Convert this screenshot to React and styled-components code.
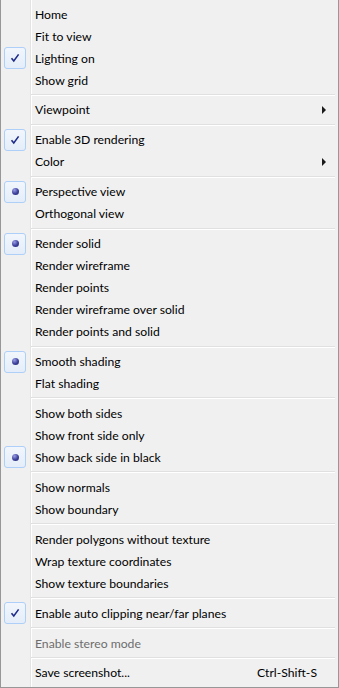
import React from 'react'
import styled, { createGlobalStyle } from 'styled-components'

const Global = createGlobalStyle`
  html, body { margin: 0; padding: 0; background: #f0f0f0; }
  body { font-family: Lato, "Noto Sans", sans-serif; }
`

const Menu = styled.div`
  box-sizing: border-box;
  width: 339px;
  height: 688px;
  padding: 3px 3px 3px 0;
  border: 1px solid #979797;
  border-top: none;
  background: linear-gradient(to right, #f0f0f0 0, #f0f0f0 29px, #e2e3e3 29px, #e2e3e3 30px, #ffffff 30px, #ffffff 31px, #f0f0f0 31px);
  display: flex;
  flex-direction: column;
`

const Row = styled.div`
  height: 22px;
  display: flex;
  align-items: center;
  font-size: 12.2px;
  color: ${({ $disabled }) => ($disabled ? '#6d6d6d' : '#000')};
`

const Gutter = styled.div`
  width: 34px;
  height: 22px;
  flex: none;
  display: flex;
  align-items: center;
`

const Mark = styled.div`
  box-sizing: border-box;
  width: 22px;
  height: 22px;
  margin-left: 3px;
  border: 1px solid #aecff7;
  border-radius: 3px;
  background: linear-gradient(#f2f6fc, #e4edf9);
  display: flex;
  align-items: center;
  justify-content: center;
`

const Dot = styled.div`
  width: 7px;
  height: 7px;
  border-radius: 50%;
  background: radial-gradient(circle at 35% 30%, #9a9ee6 0, #3c3f9a 55%, #23266c 100%);
`

const Label = styled.span`
  flex: 1;
  white-space: nowrap;
`

const Shortcut = styled.span`
  margin-right: 18px;
  white-space: nowrap;
`

const Arrow = styled.span`
  width: 0;
  height: 0;
  margin-right: 9px;
  border-top: 4px solid transparent;
  border-bottom: 4px solid transparent;
  border-left: 4px solid #1a1a1a;
`

const Separator = styled.div`
  height: 8px;
  margin-left: 30px;
  display: flex;
  flex-direction: column;
  justify-content: center;
  &::before {
    content: '';
    height: 1px;
    background: #e0e0e0;
  }
  &::after {
    content: '';
    height: 1px;
    background: #ffffff;
  }
`

const Check = () => (
  <svg width="10" height="10" viewBox="0 0 10 10">
    <path d="M1.5 5.2 L3.8 8 L8.6 1.4" fill="none" stroke="#1e2a8a" strokeWidth="1.6" />
  </svg>
)

const groups = [
  [
    { t: 'Home' },
    { t: 'Fit to view' },
    { t: 'Lighting on', m: 'check' },
    { t: 'Show grid' },
  ],
  [{ t: 'Viewpoint', sub: true }],
  [
    { t: 'Enable 3D rendering', m: 'check' },
    { t: 'Color', sub: true },
  ],
  [
    { t: 'Perspective view', m: 'dot' },
    { t: 'Orthogonal view' },
  ],
  [
    { t: 'Render solid', m: 'dot' },
    { t: 'Render wireframe' },
    { t: 'Render points' },
    { t: 'Render wireframe over solid' },
    { t: 'Render points and solid' },
  ],
  [
    { t: 'Smooth shading', m: 'dot' },
    { t: 'Flat shading' },
  ],
  [
    { t: 'Show both sides' },
    { t: 'Show front side only' },
    { t: 'Show back side in black', m: 'dot' },
  ],
  [
    { t: 'Show normals' },
    { t: 'Show boundary' },
  ],
  [
    { t: 'Render polygons without texture' },
    { t: 'Wrap texture coordinates' },
    { t: 'Show texture boundaries' },
  ],
  [{ t: 'Enable auto clipping near/far planes', m: 'check' }],
  [{ t: 'Enable stereo mode', disabled: true }],
  [{ t: 'Save screenshot...', key: 'Ctrl-Shift-S' }],
]

const App = () => (
  <>
    <Global />
    <Menu>
      {groups.map((g, gi) => (
        <React.Fragment key={gi}>
          {gi > 0 && <Separator />}
          {g.map((it) => (
            <Row key={it.t} $disabled={it.disabled}>
              <Gutter>
                {it.m && <Mark>{it.m === 'check' ? <Check /> : <Dot />}</Mark>}
              </Gutter>
              <Label>{it.t}</Label>
              {it.key && <Shortcut>{it.key}</Shortcut>}
              {it.sub && <Arrow />}
            </Row>
          ))}
        </React.Fragment>
      ))}
    </Menu>
  </>
)

export default App
